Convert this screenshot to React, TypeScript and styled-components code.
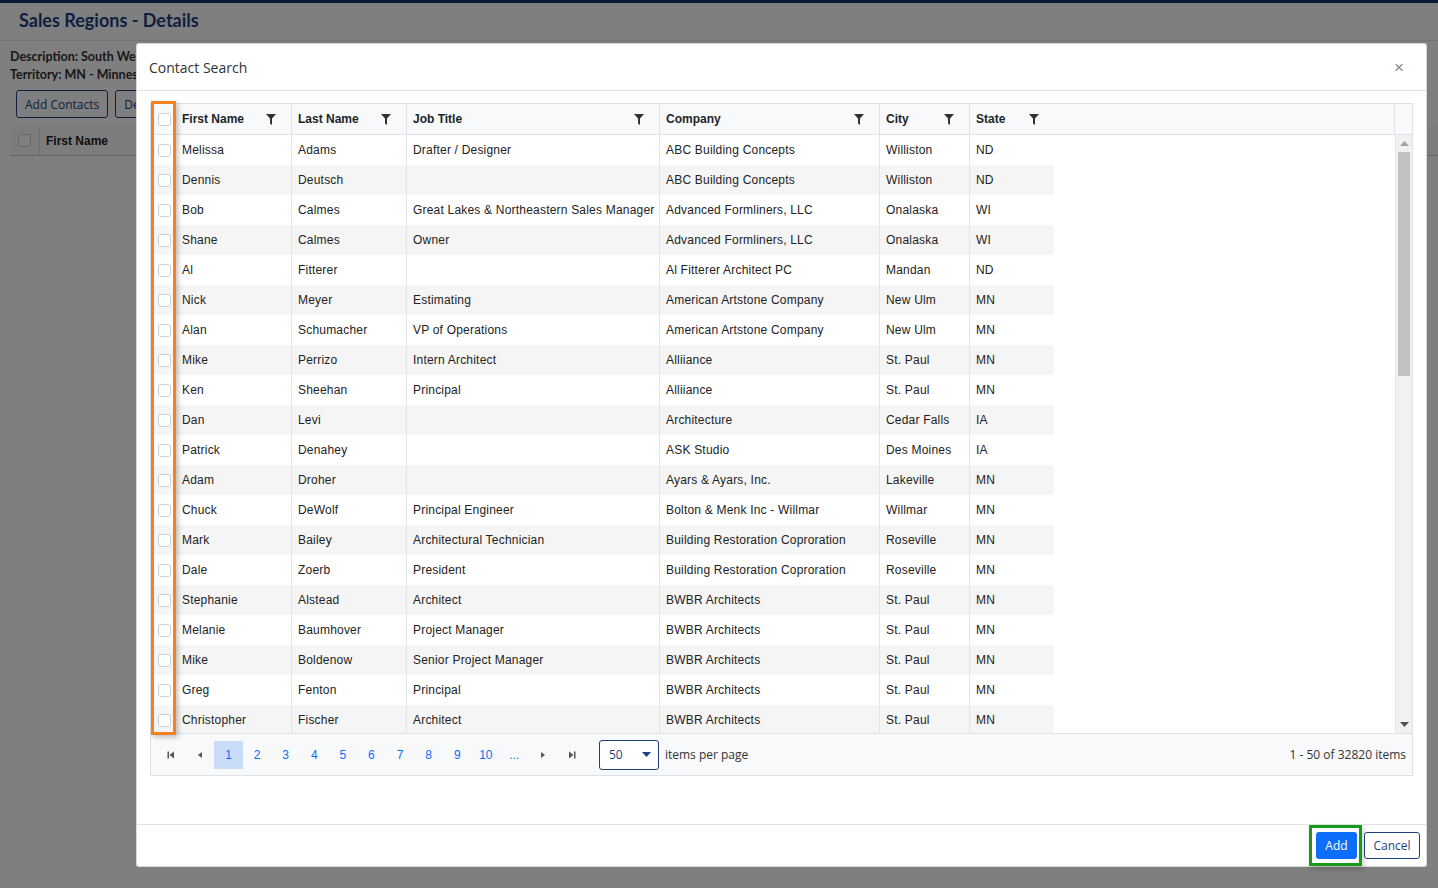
import React from "react";
import styled, { createGlobalStyle } from "styled-components";

const Global = createGlobalStyle`
  html, body { margin: 0; padding: 0; background: #fff; }
  body { font-family: "Open Sans", Arial, sans-serif; width: 1438px; height: 888px; overflow: hidden; }
  * { box-sizing: border-box; }
`;

/* ---------- background page ---------- */
const Page = styled.div`
  position: relative;
  width: 1438px;
  height: 888px;
  background: #fff;
  border-top: 3px solid #14336b;
`;
const TitleBar = styled.div`
  height: 38px;
  padding: 0 0 4px 19px;
  display: flex;
  align-items: center;
  border-bottom: 1px solid #e6e6e6;
`;
const Title = styled.h1`
  margin: 0;
  font-family: Lato, "Open Sans", sans-serif;
  font-weight: 700;
  font-size: 18px;
  color: #1d3f7f;
`;
const Content = styled.div`
  padding: 7px 0 0 10px;
  display: flex;
  flex-direction: column;
`;
const Info = styled.div`
  font-family: Lato, "Open Sans", sans-serif;
  font-weight: 700;
  font-size: 12.5px;
  color: #333;
  line-height: 18px;
`;
const BgToolbar = styled.div`
  display: flex;
  gap: 7px;
  margin: 6px 0 0 6px;
`;
const BgButton = styled.button`
  height: 28px;
  padding: 0 8px;
  background: #fff;
  border: 1px solid #1d3f7f;
  border-radius: 3px;
  color: #1d3f7f;
  font-family: "Open Sans", sans-serif;
  font-size: 12px;
`;
const BgGridHead = styled.div`
  margin: 8px 0 0 10px;
  height: 30px;
  display: flex;
  align-items: center;
  border-bottom: 1px solid #ccc;
  background: #f8f9fa;
`;
const BgCheckCell = styled.div`
  width: 30px;
  height: 100%;
  display: flex;
  align-items: center;
  justify-content: center;
  border-right: 1px solid #ddd;
`;
const BgHeadText = styled.span`
  font-family: Arial, "Liberation Sans", sans-serif;
  font-weight: 700;
  font-size: 12px;
  color: #222;
  padding-left: 6px;
`;
const Overlay = styled.div`
  position: absolute;
  inset: -3px 0 0 0;
  background: rgba(0, 0, 0, 0.5);
`;

/* ---------- modal ---------- */
const Modal = styled.div`
  position: absolute;
  left: 136px;
  top: 40px;
  width: 1291px;
  height: 824px;
  background: #fff;
  border: 1px solid rgba(0, 0, 0, 0.15);
  border-radius: 3px;
  display: flex;
  flex-direction: column;
`;
const ModalHeader = styled.div`
  height: 47px;
  flex: none;
  display: flex;
  align-items: center;
  justify-content: space-between;
  padding: 0 22px 0 12px;
  border-bottom: 1px solid #dee2e6;
`;
const ModalTitle = styled.span`
  font-family: "Open Sans", sans-serif;
  font-size: 14px;
  color: #333;
`;
const Close = styled.span`
  font-family: Arial, "Liberation Sans", sans-serif;
  font-size: 17px;
  color: #888;
  line-height: 1;
`;
const ModalBody = styled.div`
  flex: 1;
  padding: 12px 13px 0 13px;
`;
const ModalFooter = styled.div`
  height: 42px;
  flex: none;
  border-top: 1px solid #dee2e6;
  display: flex;
  align-items: center;
  justify-content: flex-end;
  gap: 2px;
  padding-right: 6px;
`;
const AddFrame = styled.span`
  display: inline-flex;
  padding: 4px 2px 4px 4px;
  border: 3px solid #1a9a1a;
  box-shadow: 2px 3px 6px rgba(0, 0, 0, 0.2);
  background: #fff;
`;
const PrimaryButton = styled.button`
  height: 27px;
  width: 41px;
  border: none;
  border-radius: 3px;
  background: #0d6efd;
  color: #fff;
  font-family: "Open Sans", sans-serif;
  font-size: 12px;
`;
const OutlineButton = styled.button`
  height: 27px;
  width: 56px;
  border: 1px solid #1d3f7f;
  border-radius: 3px;
  background: #fff;
  color: #1d3f7f;
  font-family: "Open Sans", sans-serif;
  font-size: 12px;
`;

/* ---------- grid ---------- */
const COLS = "25px 116px 115px 253px 220px 90px 84px";

const Grid = styled.div`
  position: relative;
  border: 1px solid #dee2e6;
  display: flex;
  flex-direction: column;
  height: 673px;
`;
const HeadRow = styled.div`
  display: grid;
  grid-template-columns: ${COLS} 1fr 17px;
  height: 31px;
  background: #f8f9fa;
  border-bottom: 1px solid #dee2e6;
  flex: none;
`;
const HeadCell = styled.div<{ $last?: boolean }>`
  display: flex;
  align-items: center;
  justify-content: space-between;
  padding: 0 15px 0 6px;
  border-right: ${(p) => (p.$last ? "none" : "1px solid #dee2e6")};
  font-family: Arial, "Liberation Sans", sans-serif;
  font-weight: 700;
  font-size: 12px;
  color: #212529;
`;
const CheckCell = styled.div`
  display: flex;
  align-items: center;
  justify-content: center;
  padding-left: 1px;
`;
const Spacer = styled.div`
  border-right: 1px solid #dee2e6;
`;
const Box = styled.span`
  width: 13px;
  height: 13px;
  border: 1px solid #cfcfcf;
  border-radius: 3px;
  background: #fff;
  display: inline-block;
`;
const BodyWrap = styled.div`
  flex: 1;
  display: flex;
  min-height: 0;
`;
const Rows = styled.div`
  flex: 1;
  overflow: hidden;
`;
const Row = styled.div<{ $alt: boolean }>`
  display: grid;
  grid-template-columns: ${COLS};
  width: 903px;
  height: 30px;
  background: ${(p) => (p.$alt ? "#f5f5f5" : "#fff")};
`;
const Cell = styled.div<{ $last?: boolean }>`
  display: flex;
  align-items: center;
  padding-left: 6px;
  border-right: ${(p) => (p.$last ? "none" : "1px solid #e4e4e4")};
  font-family: Arial, "Liberation Sans", sans-serif;
  font-size: 12px;
  letter-spacing: 0.2px;
  color: #222;
  white-space: nowrap;
  overflow: hidden;
`;
const Scrollbar = styled.div`
  width: 17px;
  flex: none;
  background: #f1f1f1;
  border-left: 1px solid #e6e6e6;
  display: flex;
  flex-direction: column;
  align-items: center;
`;
const ScrollArrow = styled.div`
  height: 17px;
  width: 100%;
  display: flex;
  align-items: center;
  justify-content: center;
  flex: none;
`;
const ScrollTrack = styled.div`
  flex: 1;
  width: 100%;
  padding: 0 2px;
`;
const Thumb = styled.div`
  height: 224px;
  background: #c1c1c1;
`;
const Pager = styled.div`
  height: 42px;
  flex: none;
  border-top: 1px solid #dee2e6;
  background: #f8f9fa;
  display: flex;
  align-items: center;
  padding: 0 6px 0 6px;
`;
const PageBtn = styled.span<{ $active?: boolean }>`
  width: 28.6px;
  height: 28px;
  flex: none;
  display: flex;
  align-items: center;
  justify-content: center;
  font-family: Arial, "Liberation Sans", sans-serif;
  font-size: 12px;
  color: #0d6efd;
  background: ${(p) => (p.$active ? "#c9dcf8" : "transparent")};
`;
const SizeSelect = styled.div`
  margin-left: 13px;
  width: 60px;
  height: 30px;
  border: 1px solid #1d3f7f;
  border-radius: 3px;
  background: #fff;
  display: flex;
  align-items: center;
  justify-content: space-between;
  padding: 0 7px 0 9px;
  font-family: "Open Sans", sans-serif;
  font-size: 12px;
  color: #1d3f7f;
`;
const PagerText = styled.span`
  font-family: "Open Sans", sans-serif;
  font-size: 12px;
  color: #333;
  margin-left: 6px;
`;
const PagerInfo = styled(PagerText)`
  margin-left: auto;
`;
const Highlight = styled.div`
  position: absolute;
  left: 0px;
  top: -3px;
  width: 25px;
  height: 634px;
  border: 3px solid #f5801e;
  box-shadow: 2px 2px 5px rgba(0, 0, 0, 0.25);
  pointer-events: none;
`;

const Funnel = () => (
  <svg width="10" height="11" viewBox="0 0 10 11">
    <path d="M0 0H10L6 4.5V11L4 9.5V4.5Z" fill="#333" />
  </svg>
);

const Tri = ({ dir, color = "#666" }: { dir: "up" | "down" | "left" | "right"; color?: string }) => {
  const d =
    dir === "up"
      ? "M0 5L4.5 0L9 5Z"
      : dir === "down"
      ? "M0 0H9L4.5 5Z"
      : dir === "left"
      ? "M5 0V9L0 4.5Z"
      : "M0 0V9L5 4.5Z";
  const w = dir === "up" || dir === "down" ? 9 : 5;
  const h = dir === "up" || dir === "down" ? 5 : 9;
  return (
    <svg width={w} height={h} viewBox={`0 0 ${w} ${h}`}>
      <path d={d} fill={color} />
    </svg>
  );
};

const NavIcon = ({ kind }: { kind: "first" | "prev" | "next" | "last" }) => (
  <svg width="8" height="8" viewBox="0 0 8 8">
    {kind === "first" && (
      <>
        <rect x="0.5" y="0.5" width="1.5" height="7" fill="#555" />
        <path d="M7 0.5V7.5L2.5 4Z" fill="#555" />
      </>
    )}
    {kind === "prev" && <path d="M6 1V7L2 4Z" fill="#555" />}
    {kind === "next" && <path d="M2 1V7L6 4Z" fill="#555" />}
    {kind === "last" && (
      <>
        <path d="M1 0.5V7.5L5.5 4Z" fill="#555" />
        <rect x="6" y="0.5" width="1.5" height="7" fill="#555" />
      </>
    )}
  </svg>
);

type Contact = [string, string, string, string, string, string];
const data: Contact[] = [
  ["Melissa", "Adams", "Drafter / Designer", "ABC Building Concepts", "Williston", "ND"],
  ["Dennis", "Deutsch", "", "ABC Building Concepts", "Williston", "ND"],
  ["Bob", "Calmes", "Great Lakes & Northeastern Sales Manager", "Advanced Formliners, LLC", "Onalaska", "WI"],
  ["Shane", "Calmes", "Owner", "Advanced Formliners, LLC", "Onalaska", "WI"],
  ["Al", "Fitterer", "", "Al Fitterer Architect PC", "Mandan", "ND"],
  ["Nick", "Meyer", "Estimating", "American Artstone Company", "New Ulm", "MN"],
  ["Alan", "Schumacher", "VP of Operations", "American Artstone Company", "New Ulm", "MN"],
  ["Mike", "Perrizo", "Intern Architect", "Alliiance", "St. Paul", "MN"],
  ["Ken", "Sheehan", "Principal", "Alliiance", "St. Paul", "MN"],
  ["Dan", "Levi", "", "Architecture", "Cedar Falls", "IA"],
  ["Patrick", "Denahey", "", "ASK Studio", "Des Moines", "IA"],
  ["Adam", "Droher", "", "Ayars & Ayars, Inc.", "Lakeville", "MN"],
  ["Chuck", "DeWolf", "Principal Engineer", "Bolton & Menk Inc - Willmar", "Willmar", "MN"],
  ["Mark", "Bailey", "Architectural Technician", "Building Restoration Coproration", "Roseville", "MN"],
  ["Dale", "Zoerb", "President", "Building Restoration Coproration", "Roseville", "MN"],
  ["Stephanie", "Alstead", "Architect", "BWBR Architects", "St. Paul", "MN"],
  ["Melanie", "Baumhover", "Project Manager", "BWBR Architects", "St. Paul", "MN"],
  ["Mike", "Boldenow", "Senior Project Manager", "BWBR Architects", "St. Paul", "MN"],
  ["Greg", "Fenton", "Principal", "BWBR Architects", "St. Paul", "MN"],
  ["Christopher", "Fischer", "Architect", "BWBR Architects", "St. Paul", "MN"],
  ["Jeff", "Gorski", "Architect", "BWBR Architects", "St. Paul", "MN"],
];

const headers = ["First Name", "Last Name", "Job Title", "Company", "City", "State"];
const pages = ["1", "2", "3", "4", "5", "6", "7", "8", "9", "10", "..."];

export default function App() {
  return (
    <>
      <Global />
      <Page>
        <TitleBar>
          <Title>Sales Regions - Details</Title>
        </TitleBar>
        <Content>
          <Info>Description: South West</Info>
          <Info>Territory: MN - Minnesota</Info>
          <BgToolbar>
            <BgButton>Add Contacts</BgButton>
            <BgButton>Delete</BgButton>
          </BgToolbar>
        </Content>
        <BgGridHead>
          <BgCheckCell>
            <Box />
          </BgCheckCell>
          <BgHeadText>First Name</BgHeadText>
        </BgGridHead>
        <Overlay />
        <Modal>
          <ModalHeader>
            <ModalTitle>Contact Search</ModalTitle>
            <Close>×</Close>
          </ModalHeader>
          <ModalBody>
            <Grid>
              <HeadRow>
                <CheckCell>
                  <Box />
                </CheckCell>
                {headers.map((h, i) => (
                  <HeadCell key={h} $last={i === headers.length - 1}>
                    <span>{h}</span>
                    <Funnel />
                  </HeadCell>
                ))}
                <Spacer />
                <div />
              </HeadRow>
              <BodyWrap>
                <Rows>
                  {data.map((r, i) => (
                    <Row key={i} $alt={i % 2 === 1}>
                      <CheckCell>
                        <Box />
                      </CheckCell>
                      {r.map((c, j) => (
                        <Cell key={j} $last={j === r.length - 1}>
                          {c}
                        </Cell>
                      ))}
                    </Row>
                  ))}
                </Rows>
                <Scrollbar>
                  <ScrollArrow>
                    <Tri dir="up" color="#a3a3a3" />
                  </ScrollArrow>
                  <ScrollTrack>
                    <Thumb />
                  </ScrollTrack>
                  <ScrollArrow>
                    <Tri dir="down" color="#505050" />
                  </ScrollArrow>
                </Scrollbar>
              </BodyWrap>
              <Pager>
                <PageBtn>
                  <NavIcon kind="first" />
                </PageBtn>
                <PageBtn>
                  <NavIcon kind="prev" />
                </PageBtn>
                {pages.map((p) => (
                  <PageBtn key={p} $active={p === "1"}>
                    {p}
                  </PageBtn>
                ))}
                <PageBtn>
                  <NavIcon kind="next" />
                </PageBtn>
                <PageBtn>
                  <NavIcon kind="last" />
                </PageBtn>
                <SizeSelect>
                  <span>50</span>
                  <Tri dir="down" color="#1d3f7f" />
                </SizeSelect>
                <PagerText>items per page</PagerText>
                <PagerInfo>1 - 50 of 32820 items</PagerInfo>
              </Pager>
              <Highlight />
            </Grid>
          </ModalBody>
          <ModalFooter>
            <AddFrame>
              <PrimaryButton>Add</PrimaryButton>
            </AddFrame>
            <OutlineButton>Cancel</OutlineButton>
          </ModalFooter>
        </Modal>
      </Page>
    </>
  );
}
